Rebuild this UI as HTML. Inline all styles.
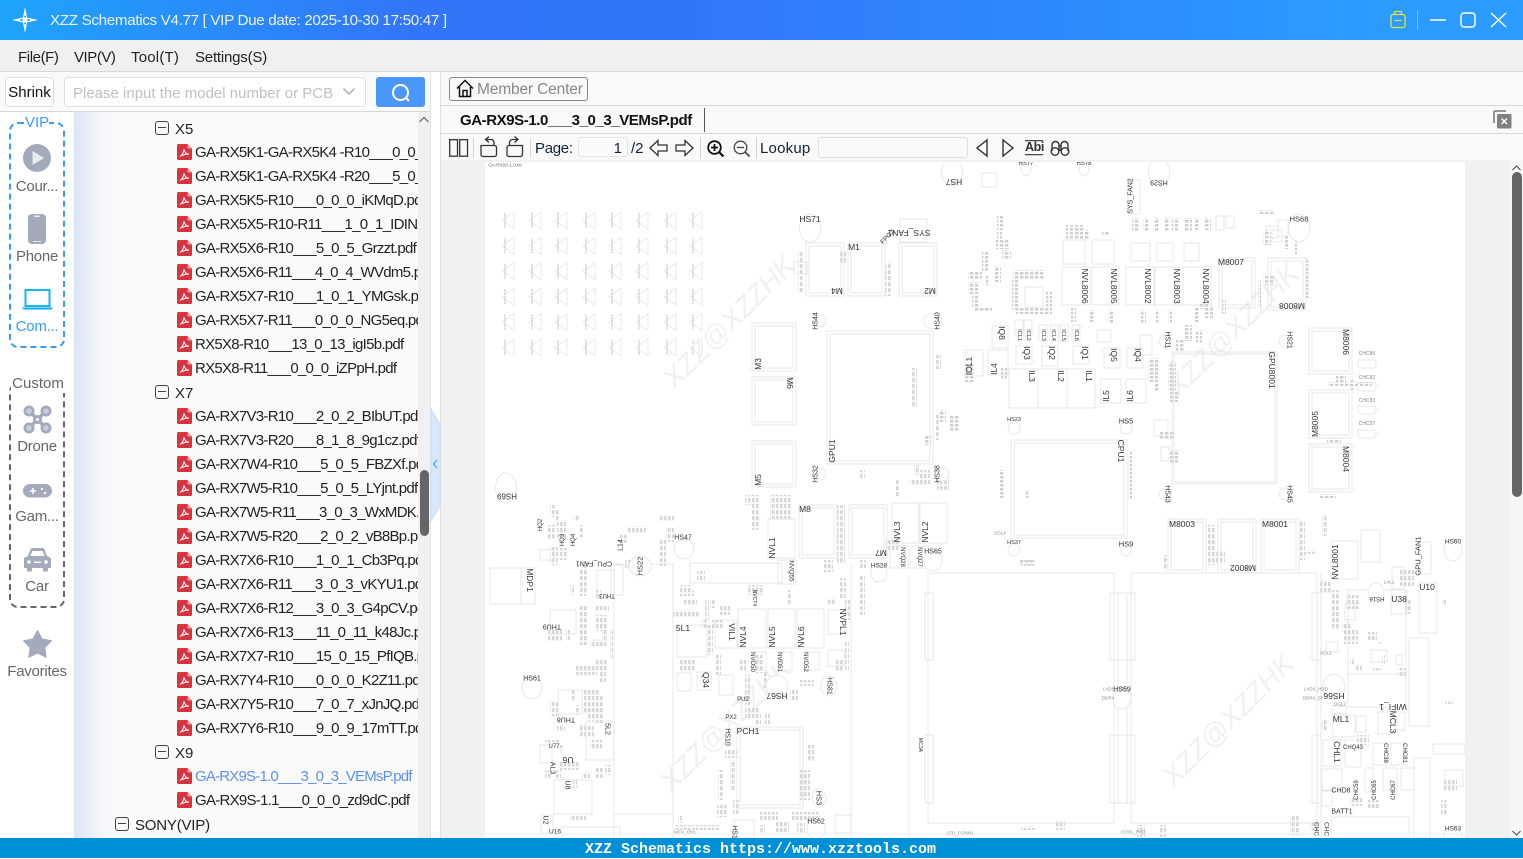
<!DOCTYPE html>
<html lang="en"><head><meta charset="utf-8"><title>XZZ Schematics</title>
<style>
html,body{margin:0;padding:0;width:1523px;height:858px;overflow:hidden;background:#fafafa;font-family:"Liberation Sans",sans-serif;color:#222}
.a{position:absolute;white-space:nowrap}
.l{position:absolute;left:0;width:74px;text-align:center;font-size:15px;line-height:20px;color:#666;margin-top:1px;letter-spacing:-.25px}
.r{position:absolute;left:120px;height:24px;line-height:24px;font-size:15px;white-space:nowrap;color:#222;letter-spacing:-.72px;margin-top:1px}
.i{position:absolute;left:102px;width:15px;height:16px}
.m{position:absolute;left:80px;width:12px;height:12px;border:1.3px solid #444;border-radius:3px}
.m:after{content:"";position:absolute;left:2px;right:2px;top:5px;height:1.4px;background:#444}
.s{position:absolute;width:1px;background:#d5d5d5}
svg{position:absolute;overflow:visible}
.t{font:8.5px "Liberation Sans",sans-serif;fill:#333;text-anchor:middle;dominant-baseline:central}
.u{font:4.5px "Liberation Sans",sans-serif;fill:#888;text-anchor:middle;dominant-baseline:central}
.w{font:italic 28px "Liberation Sans",sans-serif;fill:#f1f1f1;text-anchor:middle;dominant-baseline:central}
</style></head><body>
<svg width="0" height="0" style="left:0;top:0"><defs>
<symbol id="pdf" viewBox="0 0 15 16"><path d="M1.5 0H10.5L15 4.5V14.5a1.5 1.5 0 0 1-1.5 1.5H1.5A1.5 1.5 0 0 1 0 14.5V1.5A1.5 1.5 0 0 1 1.5 0Z" fill="#d8343f"/><path d="M10.5 0V4.500H15Z" fill="#f09aa0"/><path d="M3 12.500C5 11.500 6.500 8.500 7 5.500C7.500 8.500 9 10 12 10.200C9.500 10 6 10.800 3 12.500Z" fill="none" stroke="#fff" stroke-width="1"/></symbol>
<pattern id="p" width="5" height="4" patternUnits="userSpaceOnUse"><rect width="3.4" height="2.600" fill="#cfcfcf"/></pattern>
<pattern id="q" width="4" height="6" patternUnits="userSpaceOnUse"><rect width="2.600" height="4.400" fill="#d8d8d8"/></pattern>
</defs></svg>

<!-- title bar -->
<div class="a" style="left:0;top:0;width:1523px;height:40px;background:linear-gradient(90deg,#1ea4fb 0,#3375f8 27%,#3276f8 45%,#2b9bff 90%)"></div>
<svg style="left:10px;top:5px" width="30" height="30" viewBox="0 0 30 30"><path d="M15 2L17 12.500L28 15L17 17.500L15 28L13 17.500L2 15L13 12.500Z" fill="#fff"/><circle cx="11.500" cy="15" r="1.300" fill="#3a9cfb"/><circle cx="18.500" cy="15" r="1.300" fill="#3a9cfb"/><circle cx="15" cy="11.500" r="1" fill="#3a9cfb"/><circle cx="15" cy="18.500" r="1" fill="#3a9cfb"/></svg>
<div class="a" style="left:50px;top:11px;line-height:20px;font-size:15.200px;color:#eaf2ff;letter-spacing:-.33px">XZZ Schematics V4.77 [ VIP Due date: 2025-10-30 17:50:47 ]</div>
<svg style="left:1385px;top:8px" width="130" height="24" viewBox="1385 8 130 24" fill="none"><path d="M1391 16.500a2 2 0 0 1 2-2h10a2 2 0 0 1 2 2v9a2 2 0 0 1-2 2h-10a2 2 0 0 1-2-2ZM1394.500 14.500v-2a1 1 0 0 1 1-1h5a1 1 0 0 1 1 1v2M1394.500 20.500h7" stroke="#dfe23c" stroke-width="1.300"/><path d="M1417.500 10v20" stroke="#7dbdf8"/><path d="M1430 20h16" stroke="#fff" stroke-width="1.500"/><rect x="1461" y="13" width="14" height="14" rx="3" stroke="#fff" stroke-width="1.400"/><path d="M1491 13l15 14M1506 13l-15 14" stroke="#fff" stroke-width="1.400"/></svg>

<!-- menu -->
<div class="a" style="left:0;top:40px;width:1523px;height:31px;background:#f0f0f0;border-bottom:1px solid #d8d8d8"></div>
<div class="a" style="left:18px;top:48px;line-height:20px;font-size:15px;letter-spacing:-.4px">File(F)</div>
<div class="a" style="left:74px;top:48px;line-height:20px;font-size:15px;letter-spacing:-.45px">VIP(V)</div>
<div class="a" style="left:131px;top:48px;line-height:20px;font-size:15px;letter-spacing:.2px">Tool(T)</div>
<div class="a" style="left:195px;top:48px;line-height:20px;font-size:15px;letter-spacing:-.2px">Settings(S)</div>

<!-- left search row -->
<div class="a" style="left:0;top:72px;width:430px;height:39px;background:#fafafa;border-bottom:1px solid #d8d8d8"></div>
<div class="a" style="left:5px;top:77px;width:47px;height:28px;border:1px solid #ddd;border-radius:4px;background:#fff;text-align:center;line-height:30px;font-size:15px;color:#111">Shrink</div>
<div class="a" style="left:64px;top:77px;width:300px;height:28px;border:1px solid #e0e0e0;border-radius:4px;background:#fff"></div>
<div class="a" style="left:73px;top:84px;line-height:20px;font-size:15px;color:#c0c0c0;letter-spacing:0">Please input the model number or PCB</div>
<svg style="left:342px;top:87px" width="14" height="10"><path d="M1.500 1.500L7 7L12.500 1.500" fill="none" stroke="#aaa" stroke-width="1.400"/></svg>
<div class="a" style="left:376px;top:77px;width:49px;height:30px;border-radius:3px;background:#4c97fb"></div>
<svg style="left:390px;top:82px" width="22" height="22" fill="none" stroke="#fff" stroke-width="2"><circle cx="10.500" cy="10.500" r="7.500"/><path d="M16 16l3 3"/></svg>

<!-- sidebar -->
<div class="a" style="left:0;top:112px;width:74px;height:726px;background:#fff"></div>
<div class="a" style="left:74px;top:112px;width:344px;height:726px;background:linear-gradient(90deg,#dce5f4 0,#f4f6fa 26px,#fafafa 40px)"></div>

<div class="a" style="left:9px;top:122px;width:52px;height:222px;border:2px dashed #3a9bff;border-radius:9px"></div>
<div class="a" style="left:25px;top:113px;width:24px;height:20px;background:#fff;text-align:center;line-height:20px;font-size:15px;color:#3a9bff;margin-top:0">VIP</div>
<svg style="left:23px;top:144px" width="28" height="28"><circle cx="14" cy="14" r="14" fill="#a4aabb"/><path d="M9.500 7L21 14L9.500 21Z" fill="#e8eaf0"/></svg>
<div class="l" style="top:176px">Cour...</div>
<svg style="left:28px;top:214px" width="18" height="30"><rect width="18" height="30" rx="4" fill="#a4aabb"/><rect x="6" y="1.500" width="6" height="1.500" fill="#e8eaf0"/><rect x="5" y="27" width="8" height="1" fill="#e8eaf0"/></svg>
<div class="l" style="top:246px">Phone</div>
<svg style="left:22px;top:289px" width="31" height="21" fill="none"><rect x="3.500" y="1" width="24" height="16" stroke="#0fb7f5" stroke-width="2"/><path d="M0 18.500h31l-1.500 2h-28Z" fill="#15a7ff"/></svg>
<div class="l" style="top:316px;color:#3a9bff">Com...</div>

<div class="a" style="left:9px;top:383px;width:52px;height:221px;border:2px dashed #666;border-radius:9px"></div>
<div class="a" style="left:11px;top:374px;width:54px;height:19px;background:#fff;text-align:center;line-height:19px;font-size:15px;color:#666">Custom</div>
<svg style="left:23px;top:405px" width="29" height="29" fill="#a4aabb"><circle cx="6" cy="6" r="5.500"/><circle cx="23" cy="6" r="5.500"/><circle cx="6" cy="23" r="5.500"/><circle cx="23" cy="23" r="5.500"/><path d="M6 6L23 23M23 6L6 23" stroke="#a4aabb" stroke-width="3.500"/><circle cx="14.500" cy="14.500" r="4.500"/><circle cx="14.500" cy="14.500" r="1.500" fill="#fff"/><circle cx="6" cy="6" r="2.800" fill="#c9cdd8"/><circle cx="23" cy="6" r="2.800" fill="#c9cdd8"/><circle cx="6" cy="23" r="2.800" fill="#c9cdd8"/><circle cx="23" cy="23" r="2.800" fill="#c9cdd8"/></svg>
<div class="l" style="top:436px">Drone</div>
<svg style="left:23px;top:484px" width="29" height="14"><rect width="29" height="13.500" rx="6.800" fill="#a4aabb"/><path d="M7 7h6M10 4v6" stroke="#fff" stroke-width="1.500"/><circle cx="19" cy="5" r="1.100" fill="#fff"/><circle cx="22" cy="9" r="1.100" fill="#fff"/></svg>
<div class="l" style="top:506px">Gam...</div>
<svg style="left:23px;top:548px" width="29" height="24"><path d="M5 8L7.500 1.500A2 2 0 0 1 9.500 0H19.500A2 2 0 0 1 21.500 1.500L24 8L28 10V20H25V23.500H20V20H9V23.500H4V20H1V10Z" fill="#a4aabb"/><path d="M7.500 8L9.300 3H19.700L21.500 8Z" fill="#fff"/><circle cx="6" cy="14" r="1.800" fill="#fff"/><circle cx="23" cy="14" r="1.800" fill="#fff"/><rect x="11" y="13.500" width="7" height="1.500" fill="#fff"/></svg>
<div class="l" style="top:576px">Car</div>
<svg style="left:23px;top:630px" width="29" height="28"><path d="M14.500 0.500L19 9L28.500 10.800L21.800 17.700L23.200 27.300L14.500 23L5.800 27.300L7.200 17.700L0.500 10.800L10 9Z" fill="#a4aabb" stroke="#a4aabb" stroke-linejoin="round"/></svg>
<div class="l" style="top:661px">Favorites</div>

<!-- tree -->
<div class="a" style="left:75px;top:112px;width:343px;height:726px;overflow:hidden">
<div class="m" style="top:9px"></div><div class="r" style="left:100px;top:5px;letter-spacing:0">X5</div>
<svg class="i" style="top:32px" width="15" height="16"><use href="#pdf"/></svg><div class="r" style="top:28px">GA-RX5K1-GA-RX5K4 -R10___0_0_0</div>
<svg class="i" style="top:56px" width="15" height="16"><use href="#pdf"/></svg><div class="r" style="top:52px">GA-RX5K1-GA-RX5K4 -R20___5_0_5</div>
<svg class="i" style="top:80px" width="15" height="16"><use href="#pdf"/></svg><div class="r" style="top:76px">GA-RX5K5-R10___0_0_0_iKMqD.pdf</div>
<svg class="i" style="top:104px" width="15" height="16"><use href="#pdf"/></svg><div class="r" style="top:100px">GA-RX5X5-R10-R11___1_0_1_IDINZ.pdf</div>
<svg class="i" style="top:128px" width="15" height="16"><use href="#pdf"/></svg><div class="r" style="top:124px">GA-RX5X6-R10___5_0_5_Grzzt.pdf</div>
<svg class="i" style="top:152px" width="15" height="16"><use href="#pdf"/></svg><div class="r" style="top:148px">GA-RX5X6-R11___4_0_4_WVdm5.pdf</div>
<svg class="i" style="top:176px" width="15" height="16"><use href="#pdf"/></svg><div class="r" style="top:172px">GA-RX5X7-R10___1_0_1_YMGsk.pdf</div>
<svg class="i" style="top:200px" width="15" height="16"><use href="#pdf"/></svg><div class="r" style="top:196px">GA-RX5X7-R11___0_0_0_NG5eq.pdf</div>
<svg class="i" style="top:224px" width="15" height="16"><use href="#pdf"/></svg><div class="r" style="top:220px">RX5X8-R10___13_0_13_igI5b.pdf</div>
<svg class="i" style="top:248px" width="15" height="16"><use href="#pdf"/></svg><div class="r" style="top:244px">RX5X8-R11___0_0_0_iZPpH.pdf</div>
<div class="m" style="top:273px"></div><div class="r" style="left:100px;top:269px;letter-spacing:0">X7</div>
<svg class="i" style="top:296px" width="15" height="16"><use href="#pdf"/></svg><div class="r" style="top:292px">GA-RX7V3-R10___2_0_2_BIbUT.pdf</div>
<svg class="i" style="top:320px" width="15" height="16"><use href="#pdf"/></svg><div class="r" style="top:316px">GA-RX7V3-R20___8_1_8_9g1cz.pdf</div>
<svg class="i" style="top:344px" width="15" height="16"><use href="#pdf"/></svg><div class="r" style="top:340px">GA-RX7W4-R10___5_0_5_FBZXf.pdf</div>
<svg class="i" style="top:368px" width="15" height="16"><use href="#pdf"/></svg><div class="r" style="top:364px">GA-RX7W5-R10___5_0_5_LYjnt.pdf</div>
<svg class="i" style="top:392px" width="15" height="16"><use href="#pdf"/></svg><div class="r" style="top:388px">GA-RX7W5-R11___3_0_3_WxMDK.pdf</div>
<svg class="i" style="top:416px" width="15" height="16"><use href="#pdf"/></svg><div class="r" style="top:412px">GA-RX7W5-R20___2_0_2_vB8Bp.pdf</div>
<svg class="i" style="top:440px" width="15" height="16"><use href="#pdf"/></svg><div class="r" style="top:436px">GA-RX7X6-R10___1_0_1_Cb3Pq.pdf</div>
<svg class="i" style="top:464px" width="15" height="16"><use href="#pdf"/></svg><div class="r" style="top:460px">GA-RX7X6-R11___3_0_3_vKYU1.pdf</div>
<svg class="i" style="top:488px" width="15" height="16"><use href="#pdf"/></svg><div class="r" style="top:484px">GA-RX7X6-R12___3_0_3_G4pCV.pdf</div>
<svg class="i" style="top:512px" width="15" height="16"><use href="#pdf"/></svg><div class="r" style="top:508px">GA-RX7X6-R13___11_0_11_k48Jc.pdf</div>
<svg class="i" style="top:536px" width="15" height="16"><use href="#pdf"/></svg><div class="r" style="top:532px">GA-RX7X7-R10___15_0_15_PfIQB.pdf</div>
<svg class="i" style="top:560px" width="15" height="16"><use href="#pdf"/></svg><div class="r" style="top:556px">GA-RX7Y4-R10___0_0_0_K2Z11.pdf</div>
<svg class="i" style="top:584px" width="15" height="16"><use href="#pdf"/></svg><div class="r" style="top:580px">GA-RX7Y5-R10___7_0_7_xJnJQ.pdf</div>
<svg class="i" style="top:608px" width="15" height="16"><use href="#pdf"/></svg><div class="r" style="top:604px">GA-RX7Y6-R10___9_0_9_17mTT.pdf</div>
<div class="m" style="top:633px"></div><div class="r" style="left:100px;top:629px;letter-spacing:0">X9</div>
<svg class="i" style="top:656px" width="15" height="16"><use href="#pdf"/></svg><div class="r" style="top:652px;color:#5b8ff9;letter-spacing:-.8px">GA-RX9S-1.0___3_0_3_VEMsP.pdf</div>
<svg class="i" style="top:680px" width="15" height="16"><use href="#pdf"/></svg><div class="r" style="top:676px">GA-RX9S-1.1___0_0_0_zd9dC.pdf</div>
<div class="m" style="left:40px;top:705px"></div><div class="r" style="left:60px;top:701px;letter-spacing:-.2px">SONY(VIP)</div>
</div>
<div class="a" style="left:418px;top:112px;width:12px;height:726px;background:#f0f0f0"></div>
<svg style="left:418px;top:115px" width="12" height="9"><path d="M1.500 7L6 2.500L10.500 7" fill="none" stroke="#555"/></svg>
<div class="a" style="left:420px;top:470px;width:9px;height:66px;background:#666;border-radius:5px"></div>

<!-- splitter -->
<div class="a" style="left:430px;top:72px;width:1px;height:766px;background:#e2e2e2"></div>
<div class="a" style="left:431px;top:72px;width:9px;height:766px;background:#fff"></div>
<div class="a" style="left:440px;top:72px;width:1px;height:766px;background:#e0e0e0"></div>
<svg style="left:430px;top:405px" width="12" height="120"><path d="M1 4L10 19V101L1 116Z" fill="#d6e9fc" stroke="#bcdcfa" stroke-width=".7"/><path d="M7 55L3.500 59L7 63" fill="none" stroke="#4c97fb" stroke-width="1.200"/></svg>

<!-- right header -->
<div class="a" style="left:441px;top:72px;width:1082px;height:88px;background:#f9f9f9"></div>
<div class="a" style="left:441px;top:105px;width:1082px;height:1px;background:#d8d8d8"></div>
<div class="a" style="left:441px;top:133px;width:1082px;height:1px;background:#d8d8d8"></div>
<div class="a" style="left:449px;top:77px;width:137px;height:22px;border:1px solid #888;border-radius:3px"></div>
<svg style="left:456px;top:79px" width="18" height="19" fill="none" stroke="#111" stroke-width="1.500"><path d="M1 9.500L9 1.500L17 9.500M3.500 8V17.500H14.500V8M7 17.500V11.500H11V17.500"/></svg>
<div class="a" style="left:477px;top:80px;line-height:20px;font-size:15.500px;color:#888;letter-spacing:-.15px">Member Center</div>
<div class="a" style="left:460px;top:111px;line-height:20px;font-size:15px;font-weight:bold;color:#111;letter-spacing:-.42px">GA-RX9S-1.0___3_0_3_VEMsP.pdf</div>
<div class="a" style="left:704px;top:108px;width:1px;height:24px;background:#555"></div>
<svg style="left:1493px;top:110px" width="20" height="19"><path d="M1 13V2.500A1.500 1.500 0 0 1 2.500 1H13" fill="none" stroke="#888" stroke-width="1.800"/><rect x="4" y="4" width="14.500" height="14.500" rx="1.500" fill="#808080"/><path d="M8.500 8.500l5.500 5.500M14 8.500l-5.500 5.500" stroke="#fff" stroke-width="1.400"/></svg>

<!-- toolbar -->
<div class="s" style="left:473px;top:138px;height:20px"></div><div class="s" style="left:530px;top:138px;height:20px"></div><div class="s" style="left:700px;top:138px;height:20px"></div><div class="s" style="left:756px;top:138px;height:20px"></div>
<svg style="left:441px;top:134px" width="320" height="26" viewBox="441 134 320 26" fill="none" stroke="#333" stroke-width="1.300">
<rect x="449.700" y="139.700" width="7.800" height="16.500"/><rect x="459.700" y="139.700" width="7.800" height="16.500"/>
<path d="M481 145.500h13.500a2 2 0 0 1 2 2v7a2 2 0 0 1-2 2h-11.500a2 2 0 0 1-2-2ZM494 145v-2.500a3 3 0 0 0-3-3h-5M489 136.500l-3.500 3 3.500 3"/>
<path d="M522.500 145.500h-13.500a2 2 0 0 0-2 2v7a2 2 0 0 0 2 2h11.500a2 2 0 0 0 2-2ZM509.500 145v-2.500a3 3 0 0 1 3-3h5M514.500 136.500l3.500 3-3.500 3"/>
<path d="M650 148l8-7.500v4.500h9v6h-9v4.500Z"/>
<path d="M693 148l-8-7.500v4.500h-9v6h9v4.500Z"/>
<circle cx="714.500" cy="147.500" r="6.300" stroke="#111" stroke-width="1.800"/><path d="M719 152l4.500 4.500" stroke="#111" stroke-width="2.200"/><path d="M711 147.500h7M714.500 144v7" stroke="#111" stroke-width="1.800"/>
<circle cx="740.500" cy="147.500" r="6.300" stroke="#444"/><path d="M745 152l4.500 4.500" stroke-width="1.800" stroke="#444"/><path d="M737 147.500h7" stroke="#444"/>
</svg>
<div class="a" style="left:535px;top:139px;line-height:20px;font-size:15px;color:#123;letter-spacing:-.3px">Page:</div>
<div class="a" style="left:578px;top:137px;width:43px;height:18px;padding-right:5px;border:1px solid #e4e4e4;border-radius:3px;background:#fafafa;text-align:right;line-height:21px;font-size:15px;color:#123">1</div>
<div class="a" style="left:631px;top:139px;line-height:20px;font-size:15px;color:#123">/2</div>
<div class="a" style="left:760px;top:139px;line-height:20px;font-size:15px;color:#123;letter-spacing:.2px">Lookup</div>
<div class="a" style="left:818px;top:137px;width:148px;height:19px;border:1px solid #e0e0e0;border-radius:3px;background:#fafafa"></div>
<svg style="left:970px;top:134px" width="105" height="26" viewBox="970 134 105 26" fill="none" stroke="#333" stroke-width="1.400"><path d="M987 140v16l-10-8ZM1003 140v16l10-8Z"/><path d="M1025 140.700h18M1025 154.700h18" stroke-width="1.200"/><path d="M1052 151v-6a3.500 3.500 0 0 1 7 0v6M1061 151v-6a3.500 3.500 0 0 1 7 0v6M1059 146h2M1059 150h2"/><circle cx="1055" cy="151.500" r="3.800"/><circle cx="1065" cy="151.500" r="3.800"/></svg>
<div class="a" style="left:1025px;top:140px;line-height:15px;font-size:12.500px;font-weight:bold;color:#333;letter-spacing:-.4px">Abi</div>

<!-- viewer -->
<div class="a" style="left:441px;top:160px;width:1069px;height:678px;background:#f1f1f1"></div>
<div class="a" style="left:485px;top:162px;width:980px;height:676px;background:#fff"></div>
<div class="a" style="left:1510px;top:160px;width:13px;height:678px;background:#f7f7f7"></div>
<svg style="left:1510px;top:163px" width="13" height="9"><path d="M2.500 7L6.500 3L10.500 7" fill="none" stroke="#444"/></svg>
<div class="a" style="left:1512px;top:172px;width:10px;height:325px;background:#666;border-radius:5px"></div>
<svg style="left:1510px;top:829px" width="13" height="9"><path d="M2.500 2L6.500 6L10.500 2" fill="none" stroke="#444"/></svg>

<svg style="left:0;top:0" width="1523" height="838" viewBox="0 0 1523 838">
<defs><clipPath id="pg"><rect x="485" y="162" width="980" height="676"/></clipPath>
<g id="d" fill="none" stroke="#e2e2e2" stroke-width=".7"><path d="M514 212V229L502 220.500Z"/><path d="M505 213V228" stroke="#c8c8c8" stroke-width="1.600" stroke-dasharray="1 .7"/></g>
<g id="dr"><use href="#d"/><use href="#d" x="27"/><use href="#d" x="53"/><use href="#d" x="81"/><use href="#d" x="107"/><use href="#d" x="134"/><use href="#d" x="162"/><use href="#d" x="188"/></g></defs>
<g clip-path="url(#pg)">
<text x="505" y="165" style="font:4.500px 'Liberation Sans',sans-serif;fill:#666;text-anchor:middle;dominant-baseline:central">GA-RX9S-1.0.txt</text>
<use href="#dr"/><use href="#dr" y="25.400"/><use href="#dr" y="50.800"/><use href="#dr" y="76.200"/><use href="#dr" y="101.600"/><use href="#dr" y="127"/>

<!-- watermark -->
<text class="w" transform="translate(729 322) rotate(-45)">XZZ@XZZHK</text>
<text class="w" transform="translate(1233 330) rotate(-45)">XZZ@XZZHK</text>
<text class="w" transform="translate(1228 720) rotate(-45)">XZZ@XZZHK</text>
<text class="w" transform="translate(726 725) rotate(-45)">XZZ@XZZHK</text>

<!-- component texture -->
<path fill="url(#p)" d="M1013 270h31v9h-31zM1012 280h6v30h-6zM1016 308h30v6h-30zM1046 292h6v22h-6zM997 216h6v14h-6zM997 232h5v8h-5zM996 240h14v9h-14zM1002 250h9v10h-9zM982 252h6v20h-6zM994 266h7v16h-7zM986 275h4v10h-4zM968 272h14v8h-14zM968 282h10v12h-10zM972 296h6v12h-6zM974 308h18v4h-18zM1066 225h7v14h-7zM1075 225h8v14h-8zM1084 230h6v10h-6zM1102 232h8v4h-8zM1132 218h6v14h-6zM1143 218h6v14h-6zM1153 218h6v14h-6zM1164 218h6v14h-6zM1172 218h6v14h-6zM1184 218h8v14h-8zM1194 218h6v12h-6zM1205 218h6v12h-6zM1071 308h5v14h-5zM1089 310h6v12h-6zM1108 310h5v14h-5zM1141 310h5v14h-5zM1156 310h4v14h-4zM1168 310h4v14h-4zM1194 308h6v14h-6zM1205 306h8v12h-8zM1184 325h8v16h-8zM1176 340h8v12h-8zM1196 330h6v14h-6zM1148 358h10v24h-10zM1154 384h6v8h-6zM1168 362h8v30h-8zM1170 392h8v10h-8zM1200 304h8v5h-8zM1260 210h14v4h-14zM1263 230h8v15h-8zM1285 235h3v14h-3zM1294 240h3v14h-3zM1306 258h3v40h-3zM1222 300h4v14h-4zM1258 280h3v26h-3zM1263 275h12v10h-12zM1351 378h4v12h-4zM1328 382h44v4h-44zM1336 376h10v6h-10zM1327 438h14v6h-14zM1320 494h16v4h-16zM1160 432h14v8h-14zM1169 450h9v14h-9zM1128 450h4v50h-4zM999 470h5v28h-5zM1026 490h4v8h-4zM1020 560h12v5h-12zM965 364h10v18h-10zM1001 368h6v12h-6zM950 415h10v16h-10zM938 410h8v12h-8zM925 435h6v10h-6z"/>
<path fill="url(#q)" d="M912 368h5v40h-5zM936 355h5v14h-5zM935 415h4v25h-4zM937 470h12v20h-12zM914 465h5v10h-5zM895 480h4v16h-4zM910 480h20v6h-20zM860 470h5v8h-5zM886 262h6v34h-6zM840 250h6v14h-6zM798 252h6v40h-6zM885 266h5v30h-5zM920 470h10v16h-10zM745 495h14v10h-14zM770 495h22v24h-22zM776 505h8v14h-8zM752 500h8v30h-8zM837 505h8v58h-8zM886 540h14v10h-14zM860 560h6v8h-6zM823 560h10v12h-10zM860 575h5v40h-5zM840 578h6v20h-6zM827 598h8v6h-8zM787 590h4v14h-4zM748 585h16v10h-16zM710 600h6v8h-6zM680 590h14v6h-14zM705 600h4v20h-4zM690 612h10v6h-10zM720 605h10v10h-10zM712 620h12v8h-12zM708 625h5v30h-5zM715 655h6v20h-6zM740 660h6v12h-6zM755 655h8v18h-8zM763 672h5v16h-5zM800 680h14v6h-14zM745 675h5v30h-5zM790 690h8v10h-8zM836 660h8v12h-8zM845 640h4v30h-4zM845 600h5v20h-5zM745 708h14v10h-14zM755 712h6v12h-6zM765 712h5v12h-5zM718 770h6v30h-6zM725 750h12v8h-12zM730 760h6v30h-6zM733 800h6v14h-6zM760 812h18v8h-18zM792 812h28v8h-28zM760 825h5v8h-5zM775 822h14v10h-14zM797 823h8v10h-8zM820 822h4v10h-4zM675 825h45v5h-45zM678 815h4v8h-4zM717 805h10v12h-10zM800 770h10v30h-10zM808 745h6v16h-6zM550 505h6v12h-6zM555 510h4v12h-4zM574 514h5v8h-5zM557 520h9v18h-9zM548 525h8v14h-8zM580 525h4v12h-4zM550 547h8v18h-8zM560 548h8v12h-8zM582 561h6v30h-6zM580 570h6v26h-6zM570 585h4v10h-4zM596 590h5v10h-5zM595 605h14v6h-14zM602 615h5v30h-5zM595 615h8v16h-8zM590 640h16v6h-16zM580 605h8v40h-8zM548 630h14v12h-14zM566 630h4v10h-4zM610 630h3v30h-3zM595 660h12v12h-12zM575 665h22v10h-22zM600 672h6v10h-6zM571 690h4v12h-4zM582 690h18v24h-18zM596 695h8v28h-8zM588 705h12v16h-12zM576 705h4v10h-4zM550 702h10v14h-10zM556 710h4v6h-4zM580 724h14v14h-14zM590 740h12v10h-12zM557 725h8v6h-8zM545 740h14v4h-14zM558 745h6v6h-6zM560 762h20v8h-20zM582 772h8v6h-8zM596 768h8v10h-8zM605 765h6v10h-6zM573 780h4v8h-4zM570 815h16v5h-16zM545 770h6v8h-6zM555 770h6v8h-6zM620 535h8v8h-8zM628 526h14v8h-14zM625 560h6v8h-6zM640 526h6v8h-6zM666 528h8v14h-8zM660 540h6v26h-6zM660 515h14v6h-14zM697 571h8v10h-8zM679 585h12v8h-12zM683 600h14v6h-14zM673 610h18v8h-18zM702 620h6v8h-6zM680 660h16v12h-16zM1055 820h10v10h-10zM1137 825h8v12h-8zM1160 825h6v12h-6zM1021 826h14v4h-14zM1320 580h12v14h-12zM1331 590h8v40h-8zM1346 595h14v14h-14zM1342 622h10v10h-10zM1344 630h14v14h-14zM1350 658h4v6h-4zM1367 632h10v8h-10zM1405 600h6v14h-6zM1400 570h14v16h-14zM1378 640h3v4h-3zM1382 655h3v10h-3zM1356 664h6v6h-6zM1373 668h8v4h-8zM1398 668h8v8h-8zM1322 718h6v12h-6zM1357 735h12v10h-12zM1350 798h12v8h-12zM1367 800h12v8h-12zM1443 780h14v12h-14zM1441 800h6v8h-6zM1441 810h6v6h-6zM1445 700h8v4h-8zM1442 600h4v6h-4zM1322 514h6v22h-6zM1300 520h5v40h-5zM1303 550h12v4h-12zM1208 525h8v40h-8zM1213 550h12v14h-12zM1245 565h4v8h-4zM1163 555h4v14h-4zM1024 560h12v6h-12zM1290 815h10v20h-10zM1310 820h8v10h-8z"/>

<!-- outlines -->
<g fill="none" stroke="#e0e0e0" stroke-width=".7">
<path d="M806 243h38v53h-38zM809 246h32v47h-32zM848 243h37v53h-37zM851 246h31v47h-31zM899 243h38v53h-38zM902 246h32v47h-32zM900 219h27v23h-27zM794 262h13v12h-13z"/>
<path d="M752 323h44v48h-44zM755 326h38v42h-38zM752 377h44v48h-44zM755 380h38v42h-38zM752 441h44v46h-44zM755 444h38v40h-38zM827 331h106v133h-106zM830 334h100v127h-100z"/>
<path d="M1062 267h28v38h-28zM1092 267h27v38h-27zM1126 267h28v38h-28zM1155 267h28v38h-28zM1183 267h28v38h-28zM1219 258h36v50h-36zM1222 261h30v44h-30zM1268 258h38v52h-38zM1271 261h32v46h-32zM1128 180h12v34h-12zM982 173h15v14h-15z"/>
<path d="M1309 328h43v46h-43zM1312 331h37v40h-37zM1309 390h43v48h-43zM1312 393h37v42h-37zM1309 444h43v48h-43zM1312 447h37v42h-37zM1172 352h105v132h-105zM1174 354h101v128h-101zM1011 440h116v98h-116zM1014 443h110v92h-110z"/>
<path d="M1009 369h29v39h-29zM1038 369h29v39h-29zM1067 369h28v39h-28zM1101 379h20v24h-20zM1126 379h20v24h-20zM965 350h18v26h-18zM988 350h20v25h-20zM992 326h16v22h-16zM1016 346h16v18h-16zM1042 346h16v20h-16zM1073 346h16v18h-16zM1104 348h16v20h-16zM1127 348h16v20h-16zM1025 287h18v20h-18zM1063 240h22v24h-22zM1092 240h22v24h-22zM1131 243h19v18h-19zM1157 243h16v18h-16zM1184 243h15v18h-15zM1015 320h8v16h-8zM1024 320h8v16h-8zM1039 325h8v16h-8zM1050 325h8v16h-8zM1060 325h8v16h-8zM1072 325h8v16h-8zM1097 330h14v12h-14zM1140 335h12v20h-12zM1154 420h14v16h-14zM1161 447h8v14h-8zM1266 226h12v12h-12zM1278 220h10v16h-10zM1216 216h8v14h-8zM1226 216h8v12h-8zM1272 230h10v12h-10z"/>
<path d="M1358 360h18v5a3 3 0 0 1-3 3h-12a3 3 0 0 1-3-3zM1358 383h18v5a3 3 0 0 1-3 3h-12a3 3 0 0 1-3-3zM1358 406h18v5a3 3 0 0 1-3 3h-12a3 3 0 0 1-3-3zM1358 430h18v5a3 3 0 0 1-3 3h-12a3 3 0 0 1-3-3z"/>
<path d="M490 568h31v36h-31zM521 568h14v36h-14zM614 563v275M673 563v275M614 564h59M614 814h59M690 563h92v20h-92zM851 565v273M909 575v263M928 573h186v250h-186zM1131 573h186v250h-186zM1110 593h25v67h-25zM1110 735h25v68h-25zM1118 593v210M1127 593v210M925 593h8v67h-8zM925 735h8v68h-8zM1312 593h9v67h-9zM1312 735h9v68h-9zM1321 573v265M1168 519h38v54h-38zM1171 522h32v48h-32zM1218 519h38v54h-38zM1221 522h32v48h-32zM1261 519h38v54h-38zM1264 522h32v48h-32z"/>
<path d="M677 625h30v32h-30zM738 609h28v39h-28zM768 609h27v39h-27zM797 609h27v39h-27zM715 620h22v28h-22zM828 610h18v24h-18zM697 672h14v18h-14zM677 673h14v18h-14zM752 652h14v18h-14zM778 652h14v18h-14zM805 652h14v18h-14zM828 650h16v16h-16zM719 675h14v20h-14zM737 727h66v81h-66zM740 730h60v75h-60zM799 505h38v53h-38zM802 508h32v47h-32zM849 505h38v53h-38zM852 508h32v47h-32zM768 519h27v39h-27zM892 503h27v40h-27zM920 503h27v40h-27zM890 546h18v22h-18zM910 546h18v22h-18zM778 560h18v24h-18zM734 820h20v18h-20zM835 815h16v18h-16z"/>
<path d="M550 610h26v24h-26zM558 690h24v24h-24zM586 722h28v38h-28zM554 780h38v34h-38zM611 565h12v30h-12zM597 570h17v28h-17zM594 640h6v6h-6zM540 745h12v18h-12zM541 815h12v18h-12zM562 827h58v12h-58zM540 550h14v10h-14z"/>
<path d="M1331 541h27v38h-27zM1361 530h19v32h-19zM1419 542h12v32h-12zM1419 583h18v50h-18zM1409 638h20v88h-20zM1414 758h16v80h-16zM1331 817h78v21h-78zM1348 590h58v117h-58zM1348 674h58M1392 567h12v22h-12zM1391 590h16v24h-16zM1345 604h10v16h-10zM1326 642h12v10h-12zM1371 650h16v12h-16zM1396 655h6v10h-6zM1332 706h14v8h-14zM1333 715h22v22h-22zM1356 716h10v16h-10zM1378 712h16v22h-16zM1397 712h8v18h-8zM1323 740h18v26h-18zM1345 740h16v27h-16zM1373 743h13v22h-13zM1391 743h14v22h-14zM1322 769h20v22h-20zM1365 768h8v24h-8zM1383 768h14v22h-14zM1401 768h13v22h-13zM1322 790h10v16h-10zM1433 744h32v10h-32zM1445 770h18v16h-18z"/>
</g>
<g fill="#fff" stroke="#e0e0e0" stroke-width=".7">
<ellipse cx="952" cy="172" rx="10.500" ry="14"/><ellipse cx="810" cy="228" rx="10.500" ry="14"/><ellipse cx="1159" cy="172" rx="10.500" ry="14"/><ellipse cx="1299" cy="228" rx="10.500" ry="14"/><ellipse cx="1026" cy="168" rx="5" ry="8"/><ellipse cx="1084" cy="168" rx="5" ry="8"/>
<ellipse cx="506" cy="488" rx="10.500" ry="15"/><ellipse cx="532" cy="688" rx="10" ry="11"/><ellipse cx="640" cy="566" rx="11" ry="10"/><ellipse cx="684" cy="549" rx="10" ry="10"/><ellipse cx="933" cy="561" rx="9" ry="10"/><ellipse cx="879" cy="573" rx="8" ry="9"/><ellipse cx="777" cy="686" rx="11" ry="11"/><ellipse cx="829" cy="686" rx="8" ry="10"/><ellipse cx="819" cy="798" rx="7" ry="9"/><ellipse cx="816" cy="829" rx="9" ry="10"/><ellipse cx="1014" cy="550" rx="6" ry="6"/><ellipse cx="1126" cy="550" rx="5" ry="6"/><ellipse cx="1122" cy="698" rx="9" ry="11"/><ellipse cx="1334" cy="687" rx="11" ry="13"/><ellipse cx="1376" cy="593" rx="8" ry="10"/><ellipse cx="1453" cy="550" rx="9" ry="11"/><ellipse cx="1453" cy="837" rx="9" ry="11"/>
<ellipse cx="820" cy="321" rx="6" ry="6"/><ellipse cx="933" cy="321" rx="9" ry="8"/><ellipse cx="820" cy="474" rx="6" ry="6"/><ellipse cx="942" cy="474" rx="7" ry="7"/><ellipse cx="1165" cy="341" rx="6" ry="6"/><ellipse cx="1285" cy="341" rx="6" ry="6"/><ellipse cx="1014" cy="428" rx="6" ry="6"/><ellipse cx="1126" cy="428" rx="6" ry="6"/><ellipse cx="1165" cy="494" rx="6" ry="6"/><ellipse cx="1285" cy="494" rx="6" ry="6"/>
</g>

<!-- big labels -->
<g>
<text class="t" transform="translate(954 182) rotate(180)">HS7</text>
<text class="t" transform="translate(810 219)">HS71</text>
<text class="t" transform="translate(854 247)">M1</text>
<text class="t" transform="translate(837 291) rotate(180)">M4</text>
<text class="t" transform="translate(930 291) rotate(180)">M2</text>
<text class="t" transform="translate(909 233) rotate(180)">SYS_FAN1</text>
<text class="t" transform="translate(888 237) rotate(-45)" style="font-size:6.500px">FPOZ</text>
<text class="t" transform="translate(816 321) rotate(-90)" style="font-size:7px">HS44</text>
<text class="t" transform="translate(938 321) rotate(-90)" style="font-size:7px">HS40</text>
<text class="t" transform="translate(758 364) rotate(-90)">M3</text>
<text class="t" transform="translate(790 383) rotate(90)">M6</text>
<text class="t" transform="translate(758 480) rotate(-90)">M5</text>
<text class="t" transform="translate(832 451) rotate(-90)">GPU1</text>
<text class="t" transform="translate(816 474) rotate(-90)" style="font-size:7px">HS32</text>
<text class="t" transform="translate(938 474) rotate(-90)" style="font-size:7px">HS38</text>
<text class="t" transform="translate(507 496) rotate(180)" style="font-size:8px">HS69</text>
<text class="t" transform="translate(1159 182) rotate(180)" style="font-size:7px">HS29</text>
<text class="t" transform="translate(1131 196) rotate(-90)" style="font-size:7px">SYS_FAN2</text>
<text class="t" transform="translate(1026 164)" style="font-size:6px">HS77</text>
<text class="t" transform="translate(1084 164)" style="font-size:6px">HS78</text>
<text class="t" transform="translate(1299 219)" style="font-size:7.500px">HS68</text>
<text class="t" transform="translate(1085 286) rotate(90)">NVL8006</text>
<text class="t" transform="translate(1114 286) rotate(90)">NVL8005</text>
<text class="t" transform="translate(1148 286) rotate(90)">NVL8002</text>
<text class="t" transform="translate(1177 286) rotate(90)">NVL8003</text>
<text class="t" transform="translate(1206 286) rotate(90)">NVL8004</text>
<text class="t" transform="translate(1231 262)">M8007</text>
<text class="t" transform="translate(1292 306) rotate(180)">M8008</text>
<text class="t" transform="translate(1346 342) rotate(90)">M8006</text>
<text class="t" transform="translate(1315 424) rotate(-90)">M8005</text>
<text class="t" transform="translate(1346 459) rotate(90)">M8004</text>
<text class="t" transform="translate(1272 370) rotate(90)">GPU8001</text>
<text class="t" transform="translate(1289 340) rotate(90)" style="font-size:7px">HS21</text>
<text class="t" transform="translate(1167 340) rotate(90)" style="font-size:7px">HS11</text>
<text class="t" transform="translate(1121 451) rotate(90)">CPU1</text>
<text class="t" transform="translate(1126 421)" style="font-size:7.500px">HS5</text>
<text class="t" transform="translate(1014 420)" style="font-size:5.500px">HS23</text>
<text class="t" transform="translate(1167 494) rotate(90)" style="font-size:7px">HS43</text>
<text class="t" transform="translate(1289 494) rotate(90)" style="font-size:7px">HS45</text>
<text class="t" transform="translate(1032 376) rotate(90)">IL3</text>
<text class="t" transform="translate(1061 376) rotate(90)">IL2</text>
<text class="t" transform="translate(1089 376) rotate(90)">IL1</text>
<text class="t" transform="translate(1106 396) rotate(-90)">IL5</text>
<text class="t" transform="translate(1130 396) rotate(-90)">IL6</text>
<text class="t" transform="translate(969 366) rotate(-90)">IOL1</text>
<text class="t" transform="translate(994 369) rotate(-90)">IL4</text>
<text class="t" transform="translate(1002 333) rotate(90)">IQ8</text>
<text class="t" transform="translate(1027 353) rotate(90)">IQ3</text>
<text class="t" transform="translate(1052 353) rotate(90)">IQ2</text>
<text class="t" transform="translate(1085 353) rotate(90)">IQ1</text>
<text class="t" transform="translate(1114 355) rotate(90)">IQ5</text>
<text class="t" transform="translate(1138 355) rotate(90)">IQ4</text>
<text class="t" transform="translate(1019 335) rotate(90)" style="font-size:5.500px">ICL1</text>
<text class="t" transform="translate(1028 335) rotate(90)" style="font-size:5.500px">ICL2</text>
<text class="t" transform="translate(1043 335) rotate(90)" style="font-size:5.500px">ICL3</text>
<text class="t" transform="translate(1053 335) rotate(90)" style="font-size:5.500px">ICL4</text>
<text class="t" transform="translate(1063 335) rotate(90)" style="font-size:5.500px">ICL5</text>
<text class="t" transform="translate(1076 335) rotate(90)" style="font-size:5.500px">ICL6</text>

<text class="t" transform="translate(530 580) rotate(90)">MDP1</text>
<text class="t" transform="translate(594 563) rotate(180)" style="font-size:7px">CPU_FAN1</text>
<text class="t" transform="translate(607 595) rotate(180)" style="font-size:6px">THU3</text>
<text class="t" transform="translate(552 626) rotate(180)" style="font-size:7px">THU9</text>
<text class="t" transform="translate(532 679)" style="font-size:7px">HS61</text>
<text class="t" transform="translate(566 719) rotate(180)" style="font-size:7px">THU8</text>
<text class="t" transform="translate(607 729) rotate(90)" style="font-size:7px">5L2</text>
<text class="t" transform="translate(568 760) rotate(180)">U6</text>
<text class="t" transform="translate(552 768) rotate(90)" style="font-size:7px">AL3</text>
<text class="t" transform="translate(567 785) rotate(90)" style="font-size:7px">U8</text>
<text class="t" transform="translate(554 747)" style="font-size:6px">U77</text>
<text class="t" transform="translate(555 832)" style="font-size:6.500px">U16</text>
<text class="t" transform="translate(545 820) rotate(90)" style="font-size:7px">U2</text>
<text class="t" transform="translate(541 525) rotate(-90)" style="font-size:6px">HQ2</text>
<text class="t" transform="translate(563 540) rotate(-90)" style="font-size:6px">HQ3</text>
<text class="t" transform="translate(574 540) rotate(-90)" style="font-size:6px">HQ4</text>
<text class="t" transform="translate(640 566) rotate(-90)" style="font-size:7.500px">HS22</text>
<text class="t" transform="translate(683 538)" style="font-size:7px">HS47</text>
<text class="t" transform="translate(621 545) rotate(-90)" style="font-size:7px">L14</text>
<text class="t" transform="translate(683 628)">5L1</text>
<text class="t" transform="translate(732 632) rotate(90)">VIL1</text>
<text class="t" transform="translate(743 637) rotate(-90)">NVL4</text>
<text class="t" transform="translate(772 637) rotate(-90)">NVL5</text>
<text class="t" transform="translate(801 637) rotate(-90)">NVL6</text>
<text class="t" transform="translate(843 622) rotate(90)">NVPL1</text>
<text class="t" transform="translate(706 680) rotate(90)">Q34</text>
<text class="t" transform="translate(777 696) rotate(180)">HS67</text>
<text class="t" transform="translate(829 686) rotate(90)" style="font-size:7px">HS81</text>
<text class="t" transform="translate(743 700)" style="font-size:6px">PU2</text>
<text class="t" transform="translate(731 718)" style="font-size:6px">PX2</text>
<text class="t" transform="translate(727 737) rotate(90)" style="font-size:7px">HS10</text>
<text class="t" transform="translate(748 731)">PCH1</text>
<text class="t" transform="translate(819 798) rotate(90)" style="font-size:7.500px">HS3</text>
<text class="t" transform="translate(816 822)" style="font-size:7px">HS62</text>
<text class="t" transform="translate(734 832) rotate(90)" style="font-size:7px">HS1</text>
<text class="t" transform="translate(805 509)">M8</text>
<text class="t" transform="translate(881 553) rotate(180)">M7</text>
<text class="t" transform="translate(772 548) rotate(-90)">NVL1</text>
<text class="t" transform="translate(897 532) rotate(-90)">NVL3</text>
<text class="t" transform="translate(925 532) rotate(-90)">NVL2</text>
<text class="t" transform="translate(902 557) rotate(90)" style="font-size:6px">NVQ28</text>
<text class="t" transform="translate(919 557) rotate(90)" style="font-size:6px">NVQ27</text>
<text class="t" transform="translate(933 552)" style="font-size:7px">HS65</text>
<text class="t" transform="translate(879 566)" style="font-size:6.500px">HS28</text>
<text class="t" transform="translate(791 571) rotate(90)" style="font-size:6.500px">NVQ55</text>
<text class="t" transform="translate(754 598) rotate(90)" style="font-size:5px">NVCT4</text>
<text class="t" transform="translate(752 662) rotate(90)" style="font-size:6px">NVO50</text>
<text class="t" transform="translate(779 662) rotate(90)" style="font-size:6px">NVO51</text>
<text class="t" transform="translate(805 662) rotate(90)" style="font-size:6px">NVO52</text>
<text class="t" transform="translate(1182 524)">M8003</text>
<text class="t" transform="translate(1275 524)">M8001</text>
<text class="t" transform="translate(1243 568) rotate(180)">M8002</text>
<text class="t" transform="translate(1014 543)" style="font-size:5.500px">HS37</text>
<text class="t" transform="translate(1126 544)" style="font-size:7.500px">HS9</text>
<text class="t" transform="translate(1122 690)" style="font-size:7px">HS59</text>
<text class="t" transform="translate(1334 696) rotate(180)">HS66</text>
<text class="t" transform="translate(1335 562) rotate(-90)">NVL8001</text>
<text class="t" transform="translate(1418 556) rotate(-90)" style="font-size:7.500px">GPU_FAN1</text>
<text class="t" transform="translate(1453 542)" style="font-size:6.500px">HS60</text>
<text class="t" transform="translate(1427 587)">U10</text>
<text class="t" transform="translate(1399 599)">U38</text>
<text class="t" transform="translate(1377 598) rotate(180)" style="font-size:6px">HS16</text>
<text class="t" transform="translate(1341 719)">ML1</text>
<text class="t" transform="translate(1393 707) rotate(180)">WIFI_1</text>
<text class="t" transform="translate(1393 722) rotate(90)">MCL3</text>
<text class="t" transform="translate(1337 752) rotate(90)">CHL1</text>
<text class="t" transform="translate(1353 748)" style="font-size:6px">CHQ43</text>
<text class="t" transform="translate(1385 753) rotate(90)" style="font-size:6px">CHC38</text>
<text class="t" transform="translate(1404 753) rotate(90)" style="font-size:6px">CHC81</text>
<text class="t" transform="translate(1341 791)" style="font-size:7px">CHD8</text>
<text class="t" transform="translate(1357 790) rotate(-90)" style="font-size:6px">CHC59</text>
<text class="t" transform="translate(1375 790) rotate(-90)" style="font-size:6px">CHC65</text>
<text class="t" transform="translate(1394 790) rotate(-90)" style="font-size:6px">CHC67</text>
<text class="t" transform="translate(1342 812)" style="font-size:7px">BATT1</text>
<text class="t" transform="translate(1453 829)" style="font-size:6.500px">HS63</text>
<text class="t" transform="translate(1316 829) rotate(90)" style="font-size:6.500px">CHC</text>
<text class="t" transform="translate(1326 829) rotate(90)" style="font-size:6.500px">CHC</text>
<text class="t" transform="translate(920 745) rotate(90)" style="font-size:5px">MC3A</text>
</g>

<!-- tiny labels -->
<text class="u" x="1367" y="354" style="font-size:5px">CHC86</text><text class="u" x="1367" y="378" style="font-size:5px">CHC82</text><text class="u" x="1367" y="401" style="font-size:5px">CHC83</text><text class="u" x="1367" y="424" style="font-size:5px">CHC57</text>
<text class="u" x="1115" y="689">LVDS_HDD</text><text class="u" x="1108" y="698">DDR4</text><text class="u" x="1316" y="689">LVDS_HDD</text><text class="u" x="1313" y="698">DDR4_ST</text>
<text class="u" x="960" y="833">LED_CONN1</text><text class="u" x="1133" y="832">COOL_PAD</text>
<text class="u" x="1389" y="582">LAL1</text><text class="u" x="1326" y="653">DGL1</text><text class="u" x="1340" y="704">DGL2</text>
<text class="u" x="1000" y="533">DCL4</text><text class="u" x="685" y="832">MCU_ON1</text>
</g>
</svg>

<!-- footer -->
<div class="a" style="left:0;top:838px;width:1523px;height:20px;background:#0090d8"></div>
<div class="a" style="left:585px;top:840px;font:bold 15px/19px 'Liberation Mono',monospace;color:#fff">XZZ Schematics https://www.xzztools.com</div>
</body></html>
